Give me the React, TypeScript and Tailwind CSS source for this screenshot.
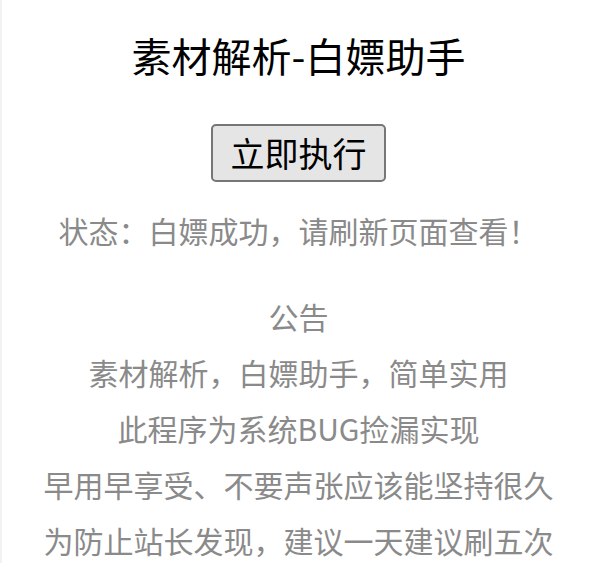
import React from 'react';

const notice = [
  '公告',
  '素材解析，白嫖助手，简单实用',
  '此程序为系统BUG捡漏实现',
  '早用早享受、不要声张应该能坚持很久',
  '为防止站长发现，建议一天建议刷五次',
];

export default function App() {
  const [status, setStatus] = React.useState('白嫖成功，请刷新页面查看！');

  return (
    <div
      className="min-h-[563px] w-full bg-white border-l-2 border-[#f2f2f2] flex flex-col items-center text-center"
      style={{ fontFamily: '"Noto Sans CJK SC", "Noto Sans", sans-serif' }}
    >
      {/* Title */}
      <h1 className="mt-[31px] text-[40px] leading-[48px] font-normal text-black">
        素材解析-白嫖助手
      </h1>

      {/* Action */}
      <button
        onClick={() => setStatus('白嫖成功，请刷新页面查看！')}
        className="mt-[45px] h-[58px] w-[175px] p-0 text-[34px] leading-none text-black bg-[#e5e5e5] border-2 border-[#767676] rounded-[5px]"
      >
        立即执行
      </button>

      <p className="mt-[33px] text-[30px] leading-[30px] text-[#8a8a8a]">
        状态：{status}
      </p>

      {/* Notice */}
      <div className="mt-[43px] text-[30px] leading-[56px] text-[#8a8a8a]">
        {notice.map((line) => (
          <p key={line}>{line}</p>
        ))}
      </div>
    </div>
  );
}
